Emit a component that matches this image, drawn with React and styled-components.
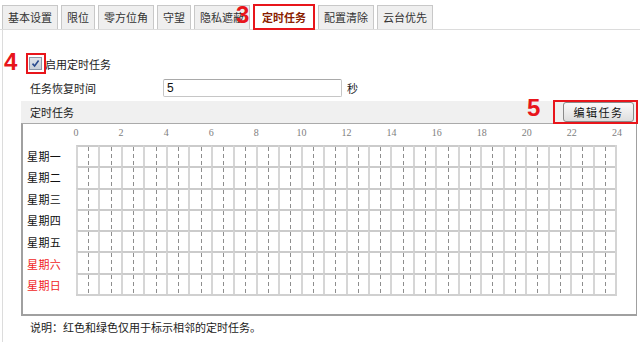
import React from 'react';
import styled, { createGlobalStyle } from 'styled-components';

const Global = createGlobalStyle`
  html, body { margin: 0; padding: 0; background: #fff; }
  body {
    font-family: "Noto Sans CJK SC", "Liberation Sans", sans-serif;
    font-size: 11px;
    color: #1a1a1a;
  }
`;

const RED = '#e8151b';

const Page = styled.div`
  width: 640px;
  height: 342px;
  overflow: hidden;
  background: #fff;
`;

const TabBar = styled.div`
  display: flex;
  align-items: flex-end;
  gap: 3px;
  height: 30px;
  padding-left: 2px;
  border-bottom: 1px solid #dcdcdc;
  box-sizing: border-box;
`;

const Tab = styled.div`
  position: relative;
  box-sizing: border-box;
  height: ${p => (p.$active ? 26 : 24)}px;
  margin-bottom: ${p => (p.$active ? -1 : 0)}px;
  padding: 0 ${p => (p.$active ? 7 : 5)}px;
  border: ${p => (p.$active ? `2px solid ${RED}` : '1px solid #c8c8c8')};
  border-bottom: ${p => (p.$active ? `2px solid ${RED}` : 'none')};
  background: ${p => (p.$active ? '#fff' : '#efefef')};
  color: ${p => (p.$active ? '#8a1d00' : '#333')};
  font-weight: ${p => (p.$active ? 'bold' : 'normal')};
  line-height: ${p => (p.$active ? 22 : 23)}px;
  white-space: nowrap;
`;

const Marker = styled.span`
  position: absolute;
  left: ${p => p.$left}px;
  top: ${p => p.$top}px;
  font-family: "Liberation Sans", Arial, sans-serif;
  font-weight: bold;
  font-size: ${p => p.$size || 24}px;
  line-height: 1;
  color: ${RED};
`;

const Outline = styled.span`
  position: absolute;
  left: ${p => p.$l}px;
  right: ${p => p.$r}px;
  top: ${p => p.$t}px;
  bottom: ${p => p.$b}px;
  border: 2px solid ${RED};
  pointer-events: none;
`;

const Body = styled.div`
  margin-left: 2px;
  height: 312px;
  border-left: 1px solid #dcdcdc;
  box-sizing: border-box;
  padding-top: 23px;
`;

const EnableRow = styled.div`
  display: flex;
  align-items: center;
  height: 21px;
  padding-left: 26px;
`;

const CheckWrap = styled.span`
  position: relative;
  display: inline-flex;
  width: 13px;
  height: 13px;
`;

const CheckBox = styled.span`
  box-sizing: border-box;
  width: 13px;
  height: 13px;
  border: 1px solid #8c97a8;
  background: linear-gradient(#dfe3ea, #c9cfd9);
  display: flex;
  align-items: center;
  justify-content: center;
`;

const CheckLabel = styled.span`
  margin-left: 3px;
`;

const FieldRow = styled.div`
  display: flex;
  align-items: center;
  height: 18px;
  margin-top: 5px;
  padding-left: 27px;
`;

const FieldLabel = styled.span`
  width: 133px;
`;

const TextInput = styled.div`
  box-sizing: border-box;
  width: 179px;
  height: 18px;
  border: 1px solid #c6c6c6;
  border-top-color: #a9a9a9;
  border-radius: 2px;
  padding-left: 3px;
  font-family: "Liberation Sans", Arial, sans-serif;
  font-size: 12px;
  line-height: 16px;
  color: #111;
`;

const Unit = styled.span`
  margin-left: 5px;
`;

const SectionHeader = styled.div`
  margin: 4px 0 0 18px;
  width: 616px;
  height: 22px;
  box-sizing: border-box;
  background: #f0f0f0;
  display: flex;
  align-items: center;
  justify-content: space-between;
  padding: 0 3px 0 9px;
`;

const ButtonWrap = styled.span`
  position: relative;
  display: inline-flex;
`;

const Button = styled.button`
  box-sizing: border-box;
  width: 71px;
  height: 20px;
  padding: 0;
  border: 1px solid #8a8a8a;
  border-radius: 3px;
  background: linear-gradient(#fafafa, #dedede);
  font-family: "Noto Sans CJK SC", sans-serif;
  font-size: 11px;
  letter-spacing: 1.5px;
  color: #111;
`;

const ScheduleBox = styled.div`
  margin-left: 18px;
  width: 616px;
  height: 193px;
  box-sizing: border-box;
  border-top: 1px solid #aaaaaa;
  border-left: 2px solid #a0a0a0;
  border-right: 1px solid #a0a0a0;
  border-bottom: 2px solid #a0a0a0;
  padding: 3px 0 0 4px;
`;

const Schedule = styled.div`
  display: grid;
  grid-template-columns: 49px 541px;
  grid-template-rows: 18px 151px;
`;

const HourScale = styled.div`
  grid-column: 2;
  width: 555px;
  margin-left: -7px;
  display: flex;
  justify-content: space-between;
`;

const HourLabel = styled.span`
  width: 14px;
  text-align: center;
  font-family: "Liberation Serif", serif;
  font-size: 10px;
  line-height: 11px;
  color: #808080;
`;

const DayColumn = styled.div`
  display: grid;
  grid-template-rows: repeat(7, 1fr);
`;

const DayLabel = styled.div`
  display: flex;
  align-items: center;
  color: ${p => (p.$weekend ? '#f01e1e' : '#111')};
  font-size: 11px;
  letter-spacing: 0.4px;
`;

const Grid = styled.div`
  box-sizing: border-box;
  display: grid;
  grid-template-columns: repeat(24, 1fr);
  grid-template-rows: repeat(7, 1fr);
  border-right: 2px solid #d4d4d4;
  border-bottom: 2px solid #d0d0d0;
`;

const Cell = styled.div`
  position: relative;
  border-left: 2px solid #d6d6d6;
  border-top: 2px solid #cbcbcb;
  &::after {
    content: '';
    position: absolute;
    top: 0;
    bottom: 0;
    left: 50%;
    width: 1px;
    background: repeating-linear-gradient(to bottom, #8e8e8e 0 4px, transparent 4px 7px);
  }
`;

const Note = styled.div`
  margin-top: 5px;
  padding-left: 27px;
  line-height: 13px;
`;

const tabs = ['基本设置', '限位', '零方位角', '守望', '隐私遮蔽', '定时任务', '配置清除', '云台优先'];
const days = ['星期一', '星期二', '星期三', '星期四', '星期五', '星期六', '星期日'];
const hours = Array.from({ length: 13 }, (_, i) => i * 2);

export default function App() {
  return (
    <Page>
      <Global />
      <TabBar>
        {tabs.map(t => (
          <Tab key={t} $active={t === '定时任务'}>
            {t}
            {t === '定时任务' && <Marker $left={-19} $top={-3}>3</Marker>}
          </Tab>
        ))}
      </TabBar>
      <Body>
        <EnableRow>
          <CheckWrap>
            <Marker $left={-25} $top={-7}>4</Marker>
            <CheckBox>
              <svg width="9" height="9" viewBox="0 0 9 9">
                <path d="M1.5 4.6 L3.6 7 L7.6 1.6" fill="none" stroke="#2a4a8e" strokeWidth="1.6" />
              </svg>
            </CheckBox>
            <Outline $l={-3} $r={-4} $t={-4} $b={-4} />
          </CheckWrap>
          <CheckLabel>启用定时任务</CheckLabel>
        </EnableRow>
        <FieldRow>
          <FieldLabel>任务恢复时间</FieldLabel>
          <TextInput>5</TextInput>
          <Unit>秒</Unit>
        </FieldRow>
        <SectionHeader>
          <span>定时任务</span>
          <ButtonWrap>
            <Marker $left={-36} $top={-6}>5</Marker>
            <Button>编辑任务</Button>
            <Outline $l={-10} $r={-4} $t={-2} $b={-2} />
          </ButtonWrap>
        </SectionHeader>
        <ScheduleBox>
          <Schedule>
            <HourScale>
              {hours.map(h => (
                <HourLabel key={h}>{h}</HourLabel>
              ))}
            </HourScale>
            <DayColumn>
              {days.map((d, i) => (
                <DayLabel key={d} $weekend={i >= 5}>{d}</DayLabel>
              ))}
            </DayColumn>
            <Grid>
              {Array.from({ length: 7 * 24 }, (_, i) => (
                <Cell key={i} />
              ))}
            </Grid>
          </Schedule>
        </ScheduleBox>
        <Note>说明：红色和绿色仅用于标示相邻的定时任务。</Note>
      </Body>
    </Page>
  );
}
